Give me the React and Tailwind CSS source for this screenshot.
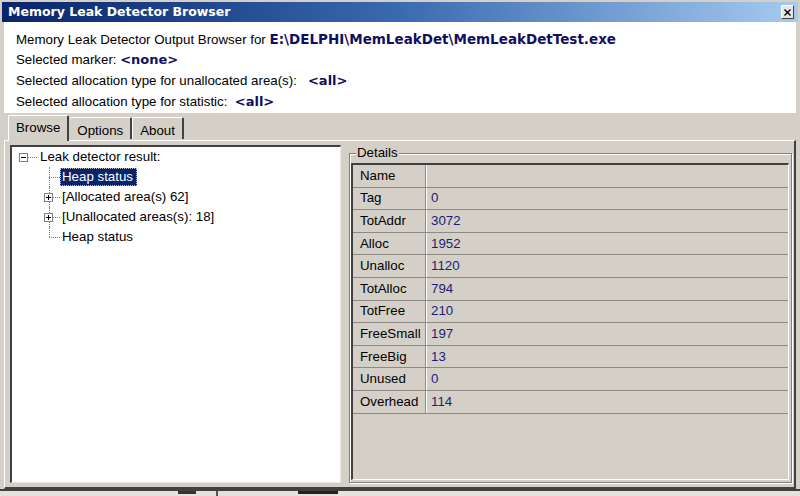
import React from "react";

const rows = [
  ["Name", ""],
  ["Tag", "0"],
  ["TotAddr", "3072"],
  ["Alloc", "1952"],
  ["Unalloc", "1120"],
  ["TotAlloc", "794"],
  ["TotFree", "210"],
  ["FreeSmall", "197"],
  ["FreeBig", "13"],
  ["Unused", "0"],
  ["Overhead", "114"],
];

function ExpBox({ plus }) {
  return (
    <svg width="9" height="9" viewBox="0 0 9 9" className="block">
      <rect x="0.5" y="0.5" width="8" height="8" fill="#fff" stroke="#808080" />
      <line x1="2" y1="4.5" x2="7" y2="4.5" stroke="#000" />
      {plus && <line x1="4.5" y1="2" x2="4.5" y2="7" stroke="#000" />}
    </svg>
  );
}

function ChildRow({ label, plus, selected, last }) {
  return (
    <div className="flex h-[20px] items-center">
      <div className="w-[27px] shrink-0" />
      <div className="relative h-full w-[21px] shrink-0">
        <div
          className={`absolute left-[10px] top-0 w-0 border-l border-dotted border-[#808080] ${
            last ? "h-[10px]" : "h-[20px]"
          }`}
        />
        <div className="absolute left-[10px] right-0 top-[10px] h-0 border-t border-dotted border-[#808080]" />
        {plus && (
          <div className="absolute left-[5px] top-[6px]">
            <ExpBox plus />
          </div>
        )}
      </div>
      <div
        className={`px-[2px] h-[18px] flex items-center leading-none ${
          selected
            ? "bg-[#0a246a] text-white outline-1 outline-dotted outline-[#c0c0c0] -outline-offset-1 pr-[4px]"
            : "text-black"
        }`}
      >
        {label}
      </div>
    </div>
  );
}

export default function App() {
  return (
    <div className="w-[800px] h-[496px] overflow-hidden bg-[#d4d0c8] flex flex-col font-['Liberation_Sans',Arial,sans-serif] text-[13.3px] text-black">
      {/* window */}
      <div className="flex flex-col h-[491px] border-b-[2px] border-[#404040] px-[4px] pt-[2px] shrink-0">
        {/* title bar */}
        <div className="-mx-[2px] h-[20px] shrink-0 bg-gradient-to-r from-[#0a246a] via-[#3a6ab0] to-[#a6caf0] flex items-center justify-between pl-[6px] pr-[4px]">
          <span className="font-['DejaVu_Sans',sans-serif] font-bold text-[12.5px] text-white">
            Memory Leak Detector Browser
          </span>
          <div className="w-[13px] h-[14px] bg-[#e8e6e0] border border-t-white border-l-white border-r-[#404040] border-b-[#404040] flex items-center justify-center">
            <svg width="7" height="7" viewBox="0 0 7 7">
              <path d="M0.5 0.5 L6.5 6.5 M6.5 0.5 L0.5 6.5" stroke="#000" strokeWidth="1.4" />
            </svg>
          </div>
        </div>

        {/* header info */}
        <div className="h-[91px] shrink-0 bg-white pl-[12px] pt-[8px] flex flex-col">
          <div className="h-[19px] flex items-center">
            <span>Memory Leak Detector Output Browser for&nbsp;</span>
            <span className="font-['DejaVu_Sans',sans-serif] font-bold text-[#101060] text-[13.5px]">
              E:\DELPHI\MemLeakDet\MemLeakDetTest.exe
            </span>
          </div>
          <div className="h-[21px] flex items-center">
            <span>Selected marker:&nbsp;</span>
            <span className="font-['DejaVu_Sans',sans-serif] font-bold text-[#101060] text-[13px]">
              &lt;none&gt;
            </span>
          </div>
          <div className="h-[21px] flex items-center">
            <span>Selected allocation type for unallocated area(s):&nbsp;&nbsp;&nbsp;</span>
            <span className="font-['DejaVu_Sans',sans-serif] font-bold text-[#101060] text-[13px]">
              &lt;all&gt;
            </span>
          </div>
          <div className="h-[21px] flex items-center">
            <span>Selected allocation type for statistic:&nbsp;&nbsp;</span>
            <span className="font-['DejaVu_Sans',sans-serif] font-bold text-[#101060] text-[13px]">
              &lt;all&gt;
            </span>
          </div>
        </div>

        {/* tabs */}
        <div className="h-[27px] shrink-0 flex items-end pl-[4px] relative z-10">
          <div className="h-[26px] -mb-[1px] bg-[#d4d0c8] border-l border-t border-white border-r-2 border-r-[#404040] rounded-t-[2px] px-[7px] flex items-start pt-[2px]">
            Browse
          </div>
          <div className="h-[22px] mb-[1px] ml-[1px] border-t border-white border-r-2 border-r-[#404040] rounded-t-[2px] px-[7px] flex items-start pt-[3px]">
            Options
          </div>
          <div className="h-[22px] mb-[1px] border-t border-l border-white border-r-2 border-r-[#404040] rounded-t-[2px] px-[7px] flex items-start pt-[3px]">
            About
          </div>
        </div>

        {/* tab sheet */}
        <div className="flex-1 min-h-0 flex border-l border-t border-white border-r-2 border-b-2 border-r-[#404040] border-b-[#404040] pl-[5px] pt-[4px] pr-[2px] pb-[4px]">
          {/* tree */}
          <div className="w-[331px] shrink-0 bg-white border-l-2 border-t-2 border-l-[#404040] border-t-[#404040] border-r border-b border-r-[#e8e6e0] border-b-[#e8e6e0] flex flex-col">
            <div className="flex h-[20px] items-center">
              <div className="relative h-full w-[26px] shrink-0">
                <div className="absolute left-[7px] top-[6px]">
                  <ExpBox />
                </div>
                <div className="absolute left-[16px] right-[1px] top-[10px] h-0 border-t border-dotted border-[#808080]" />
              </div>
              <div className="px-[2px]">Leak detector result:</div>
            </div>
            <ChildRow label="Heap status" selected />
            <ChildRow label="[Allocated area(s) 62]" plus />
            <ChildRow label="[Unallocated areas(s): 18]" plus />
            <ChildRow label="Heap status" last />
          </div>

          {/* details group */}
          <div className="flex-1 ml-[8px] mt-[8px] relative border border-[#808080] shadow-[inset_1px_1px_0_#fff,1px_1px_0_#fff] pt-[9px] pl-[1px] pr-[2px] pb-[2px] flex flex-col">
            <div className="absolute -top-[9px] left-[6px] bg-[#d4d0c8] px-[1px] leading-[16px]">
              Details
            </div>
            <div className="flex-1 border-l-2 border-t-2 border-l-[#404040] border-t-[#404040] border-r border-b border-r-white border-b-white flex flex-col">
              {rows.map(([k, v]) => (
                <div key={k} className="flex h-[22.6px] shrink-0 border-b border-[#8d8a85]">
                  <div className="w-[73px] shrink-0 pl-[7px] flex items-center border-r border-[#8d8a85]">
                    {k}
                  </div>
                  <div className="flex-1 pl-[4px] flex items-center border-l border-white text-[#1c1c78]">
                    {v}
                  </div>
                </div>
              ))}
            </div>
          </div>
        </div>
      </div>
      {/* below window */}
      <div className="flex-1 bg-[#e4e2dc] flex items-start">
        <div className="ml-[178px] w-[18px] h-[3px] bg-[#333]" />
        <div className="ml-[20px] w-[2px] h-[5px] bg-[#555]" />
        <div className="ml-[80px] w-[40px] h-[3px] bg-[#222]" />
      </div>
    </div>
  );
}
